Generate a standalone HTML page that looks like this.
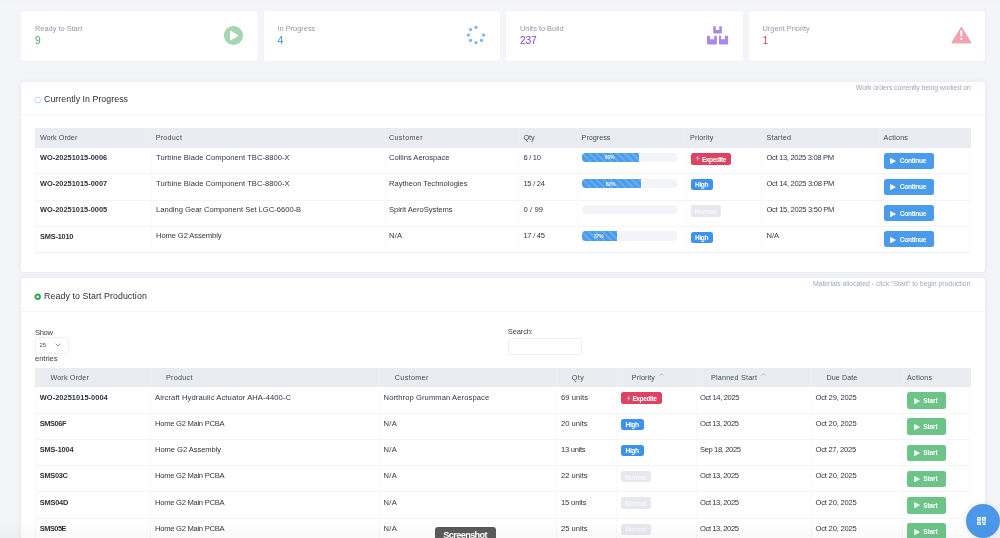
<!DOCTYPE html>
<html><head><meta charset="utf-8"><style>
html,body{margin:0;padding:0;}
body{width:1000px;height:538px;overflow:hidden;position:relative;background:#f4f5f8;font-family:"Liberation Sans",sans-serif;}
.t{position:absolute;white-space:nowrap;}
.r{position:absolute;box-sizing:content-box;}
</style></head><body>
<div id="wrap" style="position:absolute;left:0;top:0;width:1000px;height:538px;will-change:transform;">
<div class="r" style="left:0.00px;top:0.00px;width:1000.00px;height:2.00px;background:#f0f1f4;border-radius:0px;"></div>
<div class="r" style="left:21.00px;top:11.00px;width:236.50px;height:50.00px;background:#fff;border-radius:3px;box-shadow:0 0 2px rgba(30,40,80,0.04);"></div>
<div class="t" style="left:35.00px;top:24.84px;font-size:7.4px;line-height:7.4px;color:#9497ab;">Ready to Start</div>
<div class="t" style="left:35.00px;top:35.88px;font-size:10.3px;line-height:10.3px;color:#4fa866;">9</div>
<div class="r" style="left:263.50px;top:11.00px;width:236.50px;height:50.00px;background:#fff;border-radius:3px;box-shadow:0 0 2px rgba(30,40,80,0.04);"></div>
<div class="t" style="left:277.50px;top:24.84px;font-size:7.4px;line-height:7.4px;color:#9497ab;">In Progress</div>
<div class="t" style="left:277.50px;top:35.88px;font-size:10.3px;line-height:10.3px;color:#3a86ee;">4</div>
<div class="r" style="left:506.00px;top:11.00px;width:236.50px;height:50.00px;background:#fff;border-radius:3px;box-shadow:0 0 2px rgba(30,40,80,0.04);"></div>
<div class="t" style="left:520.00px;top:24.84px;font-size:7.4px;line-height:7.4px;color:#9497ab;">Units to Build</div>
<div class="t" style="left:520.00px;top:35.88px;font-size:10.3px;line-height:10.3px;color:#7749dd;letter-spacing:-0.193px;">237</div>
<div class="r" style="left:748.50px;top:11.00px;width:236.50px;height:50.00px;background:#fff;border-radius:3px;box-shadow:0 0 2px rgba(30,40,80,0.04);"></div>
<div class="t" style="left:762.50px;top:24.84px;font-size:7.4px;line-height:7.4px;color:#9497ab;">Urgent Priority</div>
<div class="t" style="left:762.50px;top:35.88px;font-size:10.3px;line-height:10.3px;color:#e0395a;">1</div>
<svg class="r" style="left:223px;top:25px" width="21" height="21" viewBox="0 0 21 21"><circle cx="10.5" cy="10.5" r="9.6" fill="#a5d5b1"/><path d="M7.6 6.3 L14.6 10.5 L7.6 14.7 Z" fill="#fff" stroke="#fff" stroke-width="1.2" stroke-linejoin="round"/></svg>
<svg class="r" style="left:466px;top:25.4px" width="20" height="20" viewBox="0 0 20 20"><circle cx="10.00" cy="2.30" r="1.65" fill="#7db7f1"/><circle cx="4.56" cy="4.56" r="1.65" fill="#7db7f1"/><circle cx="2.30" cy="10.00" r="1.65" fill="#7db7f1"/><circle cx="4.56" cy="15.44" r="1.65" fill="#7db7f1"/><circle cx="10.00" cy="17.70" r="1.65" fill="#7db7f1"/><circle cx="15.44" cy="15.44" r="1.65" fill="#7db7f1"/><circle cx="17.70" cy="10.00" r="1.65" fill="#7db7f1"/></svg>
<svg class="r" style="left:706px;top:25px" width="23" height="21" viewBox="0 0 23 21"><path d="M8.2 1.2 H9.8 V4.9 H13.3 V1.2 H14.9 A1 1 0 0 1 15.9 2.2 V7.6 A1 1 0 0 1 14.9 8.6 H8.2 A1 1 0 0 1 7.2 7.6 V2.2 A1 1 0 0 1 8.2 1.2 Z" fill="#a98ae8"/><path d="M2 10.8 H4 V14.2 H8.2 V10.8 H9.9 A1 1 0 0 1 10.9 11.8 V18.6 A1 1 0 0 1 9.9 19.6 H2 A1 1 0 0 1 1 18.6 V11.8 A1 1 0 0 1 2 10.8 Z" fill="#a98ae8"/><path d="M13.9 10.8 H15 V14.2 H18.9 V10.8 H21.1 A1 1 0 0 1 22.1 11.8 V18.6 A1 1 0 0 1 21.1 19.6 H13.9 A1 1 0 0 1 12.9 18.6 V11.8 A1 1 0 0 1 13.9 10.8 Z" fill="#a98ae8"/></svg>
<svg class="r" style="left:951px;top:26px" width="21" height="18" viewBox="0 0 21 18"><path d="M10.4 1.3 L19.8 16.8 L1.0 16.8 Z" fill="#f0a1b3" stroke="#f0a1b3" stroke-width="1.2" stroke-linejoin="round"/><rect x="9.35" y="4.3" width="1.9" height="6.2" rx="0.9" fill="#fff"/><circle cx="10.3" cy="12.9" r="1.1" fill="#fff"/></svg>
<div class="r" style="left:20.50px;top:81.50px;width:964.50px;height:190.00px;background:#fff;border-radius:3px;box-shadow:0 0 4px 1px rgba(30,40,70,0.05);"></div>
<div class="r" style="left:20.50px;top:114.80px;width:964.50px;height:1.00px;background:#f4f5f7;border-radius:0px;"></div>
<svg class="r" style="left:33.6px;top:95.6px" width="8" height="8" viewBox="0 0 8 8"><circle cx="4" cy="4" r="3" fill="none" stroke="#8fb6ee" stroke-width="0.9" stroke-dasharray="1.1 0.85" transform="rotate(-60 4 4)"/></svg>
<div class="t" style="left:44.00px;top:95.15px;font-size:8.8px;line-height:8.8px;color:#2b2e3a;letter-spacing:0.043px;">Currently In Progress</div>
<div class="t" style="left:855.80px;top:83.77px;font-size:7.0px;line-height:7.0px;color:#a3a6b7;letter-spacing:-0.139px;">Work orders currently being worked on</div>
<div class="r" style="left:35.00px;top:127.80px;width:935.50px;height:19.80px;background:#e9ecf1;border-radius:0px;"></div>
<div class="r" style="left:151.00px;top:127.80px;width:1.00px;height:19.80px;background:#eef0f4;border-radius:0px;"></div>
<div class="r" style="left:384.80px;top:127.80px;width:1.00px;height:19.80px;background:#eef0f4;border-radius:0px;"></div>
<div class="r" style="left:518.00px;top:127.80px;width:1.00px;height:19.80px;background:#eef0f4;border-radius:0px;"></div>
<div class="r" style="left:577.00px;top:127.80px;width:1.00px;height:19.80px;background:#eef0f4;border-radius:0px;"></div>
<div class="r" style="left:685.00px;top:127.80px;width:1.00px;height:19.80px;background:#eef0f4;border-radius:0px;"></div>
<div class="r" style="left:761.00px;top:127.80px;width:1.00px;height:19.80px;background:#eef0f4;border-radius:0px;"></div>
<div class="r" style="left:878.40px;top:127.80px;width:1.00px;height:19.80px;background:#eef0f4;border-radius:0px;"></div>
<div class="t" style="left:39.90px;top:134.11px;font-size:7.2px;line-height:7.2px;color:#474b59;letter-spacing:0.044px;">Work Order</div>
<div class="t" style="left:155.70px;top:134.11px;font-size:7.2px;line-height:7.2px;color:#474b59;letter-spacing:0.248px;">Product</div>
<div class="t" style="left:389.00px;top:134.11px;font-size:7.2px;line-height:7.2px;color:#474b59;letter-spacing:0.342px;">Customer</div>
<div class="t" style="left:523.40px;top:134.11px;font-size:7.2px;line-height:7.2px;color:#474b59;letter-spacing:-0.000px;">Qty</div>
<div class="t" style="left:581.60px;top:134.11px;font-size:7.2px;line-height:7.2px;color:#474b59;letter-spacing:-0.002px;">Progress</div>
<div class="t" style="left:690.00px;top:134.11px;font-size:7.2px;line-height:7.2px;color:#474b59;letter-spacing:0.143px;">Priority</div>
<div class="t" style="left:766.40px;top:134.11px;font-size:7.2px;line-height:7.2px;color:#474b59;letter-spacing:0.231px;">Started</div>
<div class="t" style="left:883.50px;top:134.11px;font-size:7.2px;line-height:7.2px;color:#474b59;letter-spacing:0.132px;">Actions</div>
<div class="r" style="left:35.00px;top:173.40px;width:935.50px;height:1.00px;background:#f3f4f6;border-radius:0px;"></div>
<div class="t" style="left:40.00px;top:153.74px;font-size:7.4px;line-height:7.4px;color:#2e313a;font-weight:700;letter-spacing:0.010px;">WO-20251015-0006</div>
<div class="t" style="left:156.00px;top:153.57px;font-size:7.6px;line-height:7.6px;color:#32353f;letter-spacing:0.034px;">Turbine Blade Component TBC-8800-X</div>
<div class="t" style="left:389.00px;top:153.57px;font-size:7.6px;line-height:7.6px;color:#32353f;letter-spacing:-0.016px;">Collins Aerospace</div>
<div class="t" style="left:523.40px;top:153.57px;font-size:7.6px;line-height:7.6px;color:#32353f;letter-spacing:-0.283px;">6 / 10</div>
<div class="r" style="left:581.50px;top:152.50px;width:95.70px;height:9.30px;background:#f2f4f7;border-radius:3.5px;"></div>
<div class="r" style="left:581.50px;top:152.50px;width:57.42px;height:9.30px;background:#4a9bea;border-radius:0px;border-radius:3.5px 0 0 3.5px;background-image:repeating-linear-gradient(45deg,rgba(255,255,255,0.15) 0 2.5px,transparent 2.5px 5px);"></div>
<div class="t" style="left:604.71px;top:155.20px;font-size:5.2px;line-height:5.2px;color:#e8f1fc;font-weight:700;letter-spacing:-0.204px;">60%</div>
<div class="r" style="left:690.50px;top:152.80px;width:40.50px;height:11.80px;background:#de4260;border-radius:2.5px;"></div>
<svg class="r" style="left:695.10px;top:155.40px" width="5.4" height="6.6" viewBox="0 0 5.4 6.6"><path d="M3.5 0 L0.2 3.7 H2.3 L1.5 6.6 L5.2 2.7 H3.1 Z" fill="#a4adc4"/></svg>
<div class="t" style="left:701.90px;top:156.51px;font-size:6.6px;line-height:6.6px;color:#fff;font-weight:700;letter-spacing:-0.430px;">Expedite</div>
<div class="t" style="left:766.50px;top:153.57px;font-size:7.6px;line-height:7.6px;color:#32353f;letter-spacing:-0.333px;">Oct 13, 2025 3:08 PM</div>
<div class="r" style="left:883.60px;top:152.50px;width:50.60px;height:16.00px;background:#4a9bec;border-radius:2.5px;"></div>
<svg class="r" style="left:890.40px;top:157.90px" width="6" height="6.2" viewBox="0 0 6 6.2"><path d="M0.3 0.3 L5.6 3.1 L0.3 5.9 Z" fill="#fff" stroke="#fff" stroke-width="0.5" stroke-linejoin="round"/></svg>
<div class="t" style="left:899.80px;top:158.11px;font-size:6.6px;line-height:6.6px;color:#fff;font-weight:700;letter-spacing:-0.271px;">Continue</div>
<div class="r" style="left:35.00px;top:199.70px;width:935.50px;height:1.00px;background:#f3f4f6;border-radius:0px;"></div>
<div class="t" style="left:40.00px;top:180.04px;font-size:7.4px;line-height:7.4px;color:#2e313a;font-weight:700;letter-spacing:0.010px;">WO-20251015-0007</div>
<div class="t" style="left:156.00px;top:179.87px;font-size:7.6px;line-height:7.6px;color:#32353f;letter-spacing:0.034px;">Turbine Blade Component TBC-8800-X</div>
<div class="t" style="left:389.00px;top:179.87px;font-size:7.6px;line-height:7.6px;color:#32353f;letter-spacing:-0.013px;">Raytheon Technologies</div>
<div class="t" style="left:523.40px;top:179.87px;font-size:7.6px;line-height:7.6px;color:#32353f;letter-spacing:-0.274px;">15 / 24</div>
<div class="r" style="left:581.50px;top:178.80px;width:95.70px;height:9.30px;background:#f2f4f7;border-radius:3.5px;"></div>
<div class="r" style="left:581.50px;top:178.80px;width:59.33px;height:9.30px;background:#4a9bea;border-radius:0px;border-radius:3.5px 0 0 3.5px;background-image:repeating-linear-gradient(45deg,rgba(255,255,255,0.15) 0 2.5px,transparent 2.5px 5px);"></div>
<div class="t" style="left:605.67px;top:181.50px;font-size:5.2px;line-height:5.2px;color:#e8f1fc;font-weight:700;letter-spacing:-0.204px;">62%</div>
<div class="r" style="left:690.50px;top:179.10px;width:22.50px;height:11.20px;background:#3d93ec;border-radius:2.5px;"></div>
<div class="t" style="left:695.10px;top:182.41px;font-size:6.6px;line-height:6.6px;color:#fff;font-weight:700;letter-spacing:-0.421px;">High</div>
<div class="t" style="left:766.50px;top:179.87px;font-size:7.6px;line-height:7.6px;color:#32353f;letter-spacing:-0.312px;">Oct 14, 2025 3:08 PM</div>
<div class="r" style="left:883.60px;top:178.80px;width:50.60px;height:16.00px;background:#4a9bec;border-radius:2.5px;"></div>
<svg class="r" style="left:890.40px;top:184.20px" width="6" height="6.2" viewBox="0 0 6 6.2"><path d="M0.3 0.3 L5.6 3.1 L0.3 5.9 Z" fill="#fff" stroke="#fff" stroke-width="0.5" stroke-linejoin="round"/></svg>
<div class="t" style="left:899.80px;top:184.41px;font-size:6.6px;line-height:6.6px;color:#fff;font-weight:700;letter-spacing:-0.271px;">Continue</div>
<div class="r" style="left:35.00px;top:226.00px;width:935.50px;height:1.00px;background:#f3f4f6;border-radius:0px;"></div>
<div class="t" style="left:40.00px;top:206.34px;font-size:7.4px;line-height:7.4px;color:#2e313a;font-weight:700;letter-spacing:0.010px;">WO-20251015-0005</div>
<div class="t" style="left:156.00px;top:206.17px;font-size:7.6px;line-height:7.6px;color:#32353f;letter-spacing:-0.013px;">Landing Gear Component Set LGC-6600-B</div>
<div class="t" style="left:389.00px;top:206.17px;font-size:7.6px;line-height:7.6px;color:#32353f;letter-spacing:-0.036px;">Spirit AeroSystems</div>
<div class="t" style="left:523.40px;top:206.17px;font-size:7.6px;line-height:7.6px;color:#32353f;letter-spacing:0.117px;">0 / 99</div>
<div class="r" style="left:581.50px;top:205.10px;width:95.70px;height:9.30px;background:#f2f4f7;border-radius:3.5px;"></div>
<div class="r" style="left:690.50px;top:205.40px;width:30.30px;height:11.20px;background:#e6e8ee;border-radius:2.5px;"></div>
<div class="t" style="left:694.80px;top:208.88px;font-size:6.4px;line-height:6.4px;color:#f6f7f9;font-weight:700;letter-spacing:-0.110px;">Normal</div>
<div class="t" style="left:766.50px;top:206.17px;font-size:7.6px;line-height:7.6px;color:#32353f;letter-spacing:-0.312px;">Oct 15, 2025 3:50 PM</div>
<div class="r" style="left:883.60px;top:205.10px;width:50.60px;height:16.00px;background:#4a9bec;border-radius:2.5px;"></div>
<svg class="r" style="left:890.40px;top:210.50px" width="6" height="6.2" viewBox="0 0 6 6.2"><path d="M0.3 0.3 L5.6 3.1 L0.3 5.9 Z" fill="#fff" stroke="#fff" stroke-width="0.5" stroke-linejoin="round"/></svg>
<div class="t" style="left:899.80px;top:210.71px;font-size:6.6px;line-height:6.6px;color:#fff;font-weight:700;letter-spacing:-0.271px;">Continue</div>
<div class="t" style="left:40.00px;top:232.64px;font-size:7.4px;line-height:7.4px;color:#2e313a;font-weight:700;letter-spacing:-0.209px;">SMS-1010</div>
<div class="t" style="left:156.00px;top:232.47px;font-size:7.6px;line-height:7.6px;color:#32353f;letter-spacing:-0.105px;">Home G2 Assembly</div>
<div class="t" style="left:389.00px;top:232.47px;font-size:7.6px;line-height:7.6px;color:#32353f;letter-spacing:0.165px;">N/A</div>
<div class="t" style="left:523.40px;top:232.47px;font-size:7.6px;line-height:7.6px;color:#32353f;letter-spacing:-0.274px;">17 / 45</div>
<div class="r" style="left:581.50px;top:231.40px;width:95.70px;height:9.30px;background:#f2f4f7;border-radius:3.5px;"></div>
<div class="r" style="left:581.50px;top:231.40px;width:35.41px;height:9.30px;background:#4a9bea;border-radius:0px;border-radius:3.5px 0 0 3.5px;background-image:repeating-linear-gradient(45deg,rgba(255,255,255,0.15) 0 2.5px,transparent 2.5px 5px);"></div>
<div class="t" style="left:593.70px;top:234.10px;font-size:5.2px;line-height:5.2px;color:#e8f1fc;font-weight:700;letter-spacing:-0.204px;">37%</div>
<div class="r" style="left:690.50px;top:231.70px;width:22.50px;height:11.20px;background:#3d93ec;border-radius:2.5px;"></div>
<div class="t" style="left:695.10px;top:235.01px;font-size:6.6px;line-height:6.6px;color:#fff;font-weight:700;letter-spacing:-0.421px;">High</div>
<div class="t" style="left:766.50px;top:232.47px;font-size:7.6px;line-height:7.6px;color:#32353f;letter-spacing:-0.035px;">N/A</div>
<div class="r" style="left:883.60px;top:231.40px;width:50.60px;height:16.00px;background:#4a9bec;border-radius:2.5px;"></div>
<svg class="r" style="left:890.40px;top:236.80px" width="6" height="6.2" viewBox="0 0 6 6.2"><path d="M0.3 0.3 L5.6 3.1 L0.3 5.9 Z" fill="#fff" stroke="#fff" stroke-width="0.5" stroke-linejoin="round"/></svg>
<div class="t" style="left:899.80px;top:237.01px;font-size:6.6px;line-height:6.6px;color:#fff;font-weight:700;letter-spacing:-0.271px;">Continue</div>
<div class="r" style="left:35.00px;top:147.60px;width:1.00px;height:105.20px;background:#f8f9fb;border-radius:0px;"></div>
<div class="r" style="left:151.00px;top:147.60px;width:1.00px;height:105.20px;background:#f8f9fb;border-radius:0px;"></div>
<div class="r" style="left:384.80px;top:147.60px;width:1.00px;height:105.20px;background:#f8f9fb;border-radius:0px;"></div>
<div class="r" style="left:518.00px;top:147.60px;width:1.00px;height:105.20px;background:#f8f9fb;border-radius:0px;"></div>
<div class="r" style="left:577.00px;top:147.60px;width:1.00px;height:105.20px;background:#f8f9fb;border-radius:0px;"></div>
<div class="r" style="left:685.00px;top:147.60px;width:1.00px;height:105.20px;background:#f8f9fb;border-radius:0px;"></div>
<div class="r" style="left:761.00px;top:147.60px;width:1.00px;height:105.20px;background:#f8f9fb;border-radius:0px;"></div>
<div class="r" style="left:878.40px;top:147.60px;width:1.00px;height:105.20px;background:#f8f9fb;border-radius:0px;"></div>
<div class="r" style="left:969.50px;top:147.60px;width:1.00px;height:105.20px;background:#f8f9fb;border-radius:0px;"></div>
<div class="r" style="left:35.00px;top:252.30px;width:935.50px;height:1.00px;background:#f1f2f5;border-radius:0px;"></div>
<div class="r" style="left:20.50px;top:278.00px;width:964.50px;height:300.00px;background:#fff;border-radius:3px;box-shadow:0 0 4px 1px rgba(30,40,70,0.05);"></div>
<div class="r" style="left:20.50px;top:310.80px;width:964.50px;height:1.00px;background:#f4f5f7;border-radius:0px;"></div>
<svg class="r" style="left:34px;top:293px" width="7.4" height="7.4" viewBox="0 0 7.4 7.4"><circle cx="3.7" cy="3.7" r="2.25" fill="none" stroke="#2ea44f" stroke-width="1.9"/></svg>
<div class="t" style="left:44.10px;top:292.25px;font-size:8.8px;line-height:8.8px;color:#2b2e3a;letter-spacing:0.081px;">Ready to Start Production</div>
<div class="t" style="left:812.90px;top:280.56px;font-size:6.9px;line-height:6.9px;color:#a3a6b7;letter-spacing:-0.025px;">Materials allocated - click &quot;Start&quot; to begin production</div>
<div class="t" style="left:35.00px;top:328.87px;font-size:7.6px;line-height:7.6px;color:#3a3d4a;letter-spacing:-0.337px;">Show</div>
<div class="r" style="left:34.5px;top:337.3px;width:32.5px;height:14.6px;border:0.8px solid #eef0f3;border-radius:3px"></div>
<div class="t" style="left:39.60px;top:342.89px;font-size:5.8px;line-height:5.8px;color:#4a4d5a;">25</div>
<svg class="r" style="left:55px;top:343.2px" width="6" height="4" viewBox="0 0 6 4"><path d="M0.6 0.8 L3 3.1 L5.4 0.8" fill="none" stroke="#555" stroke-width="0.7"/></svg>
<div class="t" style="left:35.00px;top:355.17px;font-size:7.6px;line-height:7.6px;color:#3a3d4a;letter-spacing:-0.052px;">entries</div>
<div class="t" style="left:507.80px;top:328.47px;font-size:7.6px;line-height:7.6px;color:#3a3d4a;letter-spacing:-0.165px;">Search:</div>
<div class="r" style="left:507.5px;top:337.8px;width:72.2px;height:15.7px;border:0.8px solid #eceef2;border-radius:3px"></div>
<div class="r" style="left:34.50px;top:367.50px;width:936.00px;height:19.50px;background:#e9ecf1;border-radius:0px;"></div>
<div class="r" style="left:150.00px;top:367.50px;width:1.00px;height:19.50px;background:#eef0f4;border-radius:0px;"></div>
<div class="r" style="left:378.60px;top:367.50px;width:1.00px;height:19.50px;background:#eef0f4;border-radius:0px;"></div>
<div class="r" style="left:556.30px;top:367.50px;width:1.00px;height:19.50px;background:#eef0f4;border-radius:0px;"></div>
<div class="r" style="left:616.00px;top:367.50px;width:1.00px;height:19.50px;background:#eef0f4;border-radius:0px;"></div>
<div class="r" style="left:695.50px;top:367.50px;width:1.00px;height:19.50px;background:#eef0f4;border-radius:0px;"></div>
<div class="r" style="left:810.50px;top:367.50px;width:1.00px;height:19.50px;background:#eef0f4;border-radius:0px;"></div>
<div class="r" style="left:902.00px;top:367.50px;width:1.00px;height:19.50px;background:#eef0f4;border-radius:0px;"></div>
<div class="t" style="left:50.40px;top:374.01px;font-size:7.2px;line-height:7.2px;color:#474b59;letter-spacing:0.155px;">Work Order</div>
<div class="t" style="left:166.00px;top:374.01px;font-size:7.2px;line-height:7.2px;color:#474b59;letter-spacing:0.281px;">Product</div>
<div class="t" style="left:394.80px;top:374.01px;font-size:7.2px;line-height:7.2px;color:#474b59;letter-spacing:0.342px;">Customer</div>
<div class="t" style="left:571.80px;top:374.01px;font-size:7.2px;line-height:7.2px;color:#474b59;letter-spacing:0.400px;">Qty</div>
<div class="t" style="left:631.80px;top:374.01px;font-size:7.2px;line-height:7.2px;color:#474b59;letter-spacing:0.100px;">Priority</div>
<div class="t" style="left:711.00px;top:374.01px;font-size:7.2px;line-height:7.2px;color:#474b59;letter-spacing:0.198px;">Planned Start</div>
<div class="t" style="left:826.50px;top:374.01px;font-size:7.2px;line-height:7.2px;color:#474b59;letter-spacing:0.069px;">Due Date</div>
<div class="t" style="left:907.00px;top:374.01px;font-size:7.2px;line-height:7.2px;color:#474b59;letter-spacing:0.265px;">Actions</div>
<svg class="r" style="left:659.00px;top:373px" width="5" height="3" viewBox="0 0 5 3"><path d="M0.6 2.6 L2.5 0.7 L4.4 2.6" fill="none" stroke="#9aa0b0" stroke-width="0.7"/></svg>
<svg class="r" style="left:760.50px;top:373px" width="5" height="3" viewBox="0 0 5 3"><path d="M0.6 2.6 L2.5 0.7 L4.4 2.6" fill="none" stroke="#9aa0b0" stroke-width="0.7"/></svg>
<div class="r" style="left:34.50px;top:387.00px;width:1.00px;height:160.00px;background:#f8f9fb;border-radius:0px;"></div>
<div class="r" style="left:150.00px;top:387.00px;width:1.00px;height:160.00px;background:#f8f9fb;border-radius:0px;"></div>
<div class="r" style="left:378.60px;top:387.00px;width:1.00px;height:160.00px;background:#f8f9fb;border-radius:0px;"></div>
<div class="r" style="left:556.30px;top:387.00px;width:1.00px;height:160.00px;background:#f8f9fb;border-radius:0px;"></div>
<div class="r" style="left:616.00px;top:387.00px;width:1.00px;height:160.00px;background:#f8f9fb;border-radius:0px;"></div>
<div class="r" style="left:695.50px;top:387.00px;width:1.00px;height:160.00px;background:#f8f9fb;border-radius:0px;"></div>
<div class="r" style="left:810.50px;top:387.00px;width:1.00px;height:160.00px;background:#f8f9fb;border-radius:0px;"></div>
<div class="r" style="left:902.00px;top:387.00px;width:1.00px;height:160.00px;background:#f8f9fb;border-radius:0px;"></div>
<div class="r" style="left:969.50px;top:387.00px;width:1.00px;height:160.00px;background:#f8f9fb;border-radius:0px;"></div>
<div class="r" style="left:34.50px;top:412.74px;width:936.00px;height:1.00px;background:#f3f4f6;border-radius:0px;"></div>
<div class="t" style="left:39.80px;top:393.74px;font-size:7.4px;line-height:7.4px;color:#2e313a;font-weight:700;letter-spacing:0.063px;">WO-20251015-0004</div>
<div class="t" style="left:155.00px;top:393.57px;font-size:7.6px;line-height:7.6px;color:#32353f;letter-spacing:0.095px;">Aircraft Hydraulic Actuator AHA-4400-C</div>
<div class="t" style="left:383.60px;top:393.57px;font-size:7.6px;line-height:7.6px;color:#32353f;letter-spacing:0.084px;">Northrop Grumman Aerospace</div>
<div class="t" style="left:561.00px;top:393.57px;font-size:7.6px;line-height:7.6px;color:#32353f;letter-spacing:0.054px;">69 units</div>
<div class="r" style="left:621.00px;top:392.40px;width:40.50px;height:11.80px;background:#de4260;border-radius:2.5px;"></div>
<svg class="r" style="left:625.60px;top:395.00px" width="5.4" height="6.6" viewBox="0 0 5.4 6.6"><path d="M3.5 0 L0.2 3.7 H2.3 L1.5 6.6 L5.2 2.7 H3.1 Z" fill="#a4adc4"/></svg>
<div class="t" style="left:632.40px;top:396.11px;font-size:6.6px;line-height:6.6px;color:#fff;font-weight:700;letter-spacing:-0.430px;">Expedite</div>
<div class="t" style="left:700.00px;top:393.57px;font-size:7.6px;line-height:7.6px;color:#32353f;letter-spacing:-0.356px;">Oct 14, 2025</div>
<div class="t" style="left:815.50px;top:393.57px;font-size:7.6px;line-height:7.6px;color:#32353f;letter-spacing:-0.202px;">Oct 29, 2025</div>
<div class="r" style="left:907.00px;top:392.10px;width:38.80px;height:16.60px;background:#6dc488;border-radius:2.5px;"></div>
<svg class="r" style="left:913.80px;top:397.50px" width="6" height="6.2" viewBox="0 0 6 6.2"><path d="M0.3 0.3 L5.6 3.1 L0.3 5.9 Z" fill="#fff" stroke="#fff" stroke-width="0.5" stroke-linejoin="round"/></svg>
<div class="t" style="left:923.20px;top:397.71px;font-size:6.6px;line-height:6.6px;color:#fff;font-weight:700;letter-spacing:-0.134px;">Start</div>
<div class="r" style="left:34.50px;top:438.98px;width:936.00px;height:1.00px;background:#f3f4f6;border-radius:0px;"></div>
<div class="t" style="left:39.80px;top:419.98px;font-size:7.4px;line-height:7.4px;color:#2e313a;font-weight:700;letter-spacing:-0.417px;">SMS06F</div>
<div class="t" style="left:155.00px;top:419.81px;font-size:7.6px;line-height:7.6px;color:#32353f;letter-spacing:-0.270px;">Home G2 Main PCBA</div>
<div class="t" style="left:383.60px;top:419.81px;font-size:7.6px;line-height:7.6px;color:#32353f;letter-spacing:0.265px;">N/A</div>
<div class="t" style="left:561.00px;top:419.81px;font-size:7.6px;line-height:7.6px;color:#32353f;letter-spacing:-0.003px;">20 units</div>
<div class="r" style="left:621.00px;top:418.64px;width:22.50px;height:11.20px;background:#3d93ec;border-radius:2.5px;"></div>
<div class="t" style="left:625.60px;top:421.95px;font-size:6.6px;line-height:6.6px;color:#fff;font-weight:700;letter-spacing:-0.421px;">High</div>
<div class="t" style="left:700.00px;top:419.81px;font-size:7.6px;line-height:7.6px;color:#32353f;letter-spacing:-0.411px;">Oct 13, 2025</div>
<div class="t" style="left:815.50px;top:419.81px;font-size:7.6px;line-height:7.6px;color:#32353f;letter-spacing:-0.202px;">Oct 20, 2025</div>
<div class="r" style="left:907.00px;top:418.34px;width:38.80px;height:16.60px;background:#6dc488;border-radius:2.5px;"></div>
<svg class="r" style="left:913.80px;top:423.74px" width="6" height="6.2" viewBox="0 0 6 6.2"><path d="M0.3 0.3 L5.6 3.1 L0.3 5.9 Z" fill="#fff" stroke="#fff" stroke-width="0.5" stroke-linejoin="round"/></svg>
<div class="t" style="left:923.20px;top:423.95px;font-size:6.6px;line-height:6.6px;color:#fff;font-weight:700;letter-spacing:-0.134px;">Start</div>
<div class="r" style="left:34.50px;top:465.22px;width:936.00px;height:1.00px;background:#f3f4f6;border-radius:0px;"></div>
<div class="t" style="left:39.80px;top:446.22px;font-size:7.4px;line-height:7.4px;color:#2e313a;font-weight:700;letter-spacing:-0.152px;">SMS-1004</div>
<div class="t" style="left:155.00px;top:446.05px;font-size:7.6px;line-height:7.6px;color:#32353f;letter-spacing:-0.065px;">Home G2 Assembly</div>
<div class="t" style="left:383.60px;top:446.05px;font-size:7.6px;line-height:7.6px;color:#32353f;letter-spacing:0.265px;">N/A</div>
<div class="t" style="left:561.00px;top:446.05px;font-size:7.6px;line-height:7.6px;color:#32353f;letter-spacing:-0.288px;">13 units</div>
<div class="r" style="left:621.00px;top:444.88px;width:22.50px;height:11.20px;background:#3d93ec;border-radius:2.5px;"></div>
<div class="t" style="left:625.60px;top:448.19px;font-size:6.6px;line-height:6.6px;color:#fff;font-weight:700;letter-spacing:-0.421px;">High</div>
<div class="t" style="left:700.00px;top:446.05px;font-size:7.6px;line-height:7.6px;color:#32353f;letter-spacing:-0.383px;">Sep 18, 2025</div>
<div class="t" style="left:815.50px;top:446.05px;font-size:7.6px;line-height:7.6px;color:#32353f;letter-spacing:-0.256px;">Oct 27, 2025</div>
<div class="r" style="left:907.00px;top:444.58px;width:38.80px;height:16.60px;background:#6dc488;border-radius:2.5px;"></div>
<svg class="r" style="left:913.80px;top:449.98px" width="6" height="6.2" viewBox="0 0 6 6.2"><path d="M0.3 0.3 L5.6 3.1 L0.3 5.9 Z" fill="#fff" stroke="#fff" stroke-width="0.5" stroke-linejoin="round"/></svg>
<div class="t" style="left:923.20px;top:450.19px;font-size:6.6px;line-height:6.6px;color:#fff;font-weight:700;letter-spacing:-0.134px;">Start</div>
<div class="r" style="left:34.50px;top:491.46px;width:936.00px;height:1.00px;background:#f3f4f6;border-radius:0px;"></div>
<div class="t" style="left:39.80px;top:472.46px;font-size:7.4px;line-height:7.4px;color:#2e313a;font-weight:700;letter-spacing:-0.282px;">SMS03C</div>
<div class="t" style="left:155.00px;top:472.29px;font-size:7.6px;line-height:7.6px;color:#32353f;letter-spacing:-0.270px;">Home G2 Main PCBA</div>
<div class="t" style="left:383.60px;top:472.29px;font-size:7.6px;line-height:7.6px;color:#32353f;letter-spacing:0.265px;">N/A</div>
<div class="t" style="left:561.00px;top:472.29px;font-size:7.6px;line-height:7.6px;color:#32353f;letter-spacing:-0.003px;">22 units</div>
<div class="r" style="left:621.00px;top:471.12px;width:30.30px;height:11.20px;background:#e6e8ee;border-radius:2.5px;"></div>
<div class="t" style="left:625.30px;top:474.60px;font-size:6.4px;line-height:6.4px;color:#f6f7f9;font-weight:700;letter-spacing:-0.110px;">Normal</div>
<div class="t" style="left:700.00px;top:472.29px;font-size:7.6px;line-height:7.6px;color:#32353f;letter-spacing:-0.411px;">Oct 13, 2025</div>
<div class="t" style="left:815.50px;top:472.29px;font-size:7.6px;line-height:7.6px;color:#32353f;letter-spacing:-0.202px;">Oct 20, 2025</div>
<div class="r" style="left:907.00px;top:470.82px;width:38.80px;height:16.60px;background:#6dc488;border-radius:2.5px;"></div>
<svg class="r" style="left:913.80px;top:476.22px" width="6" height="6.2" viewBox="0 0 6 6.2"><path d="M0.3 0.3 L5.6 3.1 L0.3 5.9 Z" fill="#fff" stroke="#fff" stroke-width="0.5" stroke-linejoin="round"/></svg>
<div class="t" style="left:923.20px;top:476.43px;font-size:6.6px;line-height:6.6px;color:#fff;font-weight:700;letter-spacing:-0.134px;">Start</div>
<div class="r" style="left:34.50px;top:517.70px;width:936.00px;height:1.00px;background:#f3f4f6;border-radius:0px;"></div>
<div class="t" style="left:39.80px;top:498.70px;font-size:7.4px;line-height:7.4px;color:#2e313a;font-weight:700;letter-spacing:-0.222px;">SMS04D</div>
<div class="t" style="left:155.00px;top:498.53px;font-size:7.6px;line-height:7.6px;color:#32353f;letter-spacing:-0.270px;">Home G2 Main PCBA</div>
<div class="t" style="left:383.60px;top:498.53px;font-size:7.6px;line-height:7.6px;color:#32353f;letter-spacing:0.265px;">N/A</div>
<div class="t" style="left:561.00px;top:498.53px;font-size:7.6px;line-height:7.6px;color:#32353f;letter-spacing:-0.146px;">15 units</div>
<div class="r" style="left:621.00px;top:497.36px;width:30.30px;height:11.20px;background:#e6e8ee;border-radius:2.5px;"></div>
<div class="t" style="left:625.30px;top:500.84px;font-size:6.4px;line-height:6.4px;color:#f6f7f9;font-weight:700;letter-spacing:-0.110px;">Normal</div>
<div class="t" style="left:700.00px;top:498.53px;font-size:7.6px;line-height:7.6px;color:#32353f;letter-spacing:-0.411px;">Oct 13, 2025</div>
<div class="t" style="left:815.50px;top:498.53px;font-size:7.6px;line-height:7.6px;color:#32353f;letter-spacing:-0.202px;">Oct 20, 2025</div>
<div class="r" style="left:907.00px;top:497.06px;width:38.80px;height:16.60px;background:#6dc488;border-radius:2.5px;"></div>
<svg class="r" style="left:913.80px;top:502.46px" width="6" height="6.2" viewBox="0 0 6 6.2"><path d="M0.3 0.3 L5.6 3.1 L0.3 5.9 Z" fill="#fff" stroke="#fff" stroke-width="0.5" stroke-linejoin="round"/></svg>
<div class="t" style="left:923.20px;top:502.67px;font-size:6.6px;line-height:6.6px;color:#fff;font-weight:700;letter-spacing:-0.134px;">Start</div>
<div class="r" style="left:34.50px;top:543.94px;width:936.00px;height:1.00px;background:#f3f4f6;border-radius:0px;"></div>
<div class="t" style="left:39.80px;top:524.94px;font-size:7.4px;line-height:7.4px;color:#2e313a;font-weight:700;letter-spacing:-0.501px;">SMS05E</div>
<div class="t" style="left:155.00px;top:524.77px;font-size:7.6px;line-height:7.6px;color:#32353f;letter-spacing:-0.270px;">Home G2 Main PCBA</div>
<div class="t" style="left:383.60px;top:524.77px;font-size:7.6px;line-height:7.6px;color:#32353f;letter-spacing:0.265px;">N/A</div>
<div class="t" style="left:561.00px;top:524.77px;font-size:7.6px;line-height:7.6px;color:#32353f;letter-spacing:-0.003px;">25 units</div>
<div class="r" style="left:621.00px;top:523.60px;width:30.30px;height:11.20px;background:#e6e8ee;border-radius:2.5px;"></div>
<div class="t" style="left:625.30px;top:527.08px;font-size:6.4px;line-height:6.4px;color:#f6f7f9;font-weight:700;letter-spacing:-0.110px;">Normal</div>
<div class="t" style="left:700.00px;top:524.77px;font-size:7.6px;line-height:7.6px;color:#32353f;letter-spacing:-0.411px;">Oct 13, 2025</div>
<div class="t" style="left:815.50px;top:524.77px;font-size:7.6px;line-height:7.6px;color:#32353f;letter-spacing:-0.202px;">Oct 20, 2025</div>
<div class="r" style="left:907.00px;top:523.30px;width:38.80px;height:16.60px;background:#6dc488;border-radius:2.5px;"></div>
<svg class="r" style="left:913.80px;top:528.70px" width="6" height="6.2" viewBox="0 0 6 6.2"><path d="M0.3 0.3 L5.6 3.1 L0.3 5.9 Z" fill="#fff" stroke="#fff" stroke-width="0.5" stroke-linejoin="round"/></svg>
<div class="t" style="left:923.20px;top:528.91px;font-size:6.6px;line-height:6.6px;color:#fff;font-weight:700;letter-spacing:-0.134px;">Start</div>
<div class="r" style="left:965.5px;top:504px;width:34px;height:34px;border-radius:50%;background:#4a98ea;box-shadow:0 0 0 1px rgba(250,235,210,0.6),0 0 6px rgba(0,0,0,0.08)"></div>
<svg class="r" style="left:977px;top:517px" width="9" height="8.4" viewBox="0 0 9 8.4"><path fill="#fff" fill-rule="evenodd" d="M0 0.6 A0.6 0.6 0 0 1 0.6 0 H3.4 A0.6 0.6 0 0 1 4 0.6 V3.2 A0.6 0.6 0 0 1 3.4 3.8 H0.6 A0.6 0.6 0 0 1 0 3.2 Z M1.3 1.2 V2.6 H2.7 V1.2 Z"/><path fill="#fff" fill-rule="evenodd" d="M5 0.6 A0.6 0.6 0 0 1 5.6 0 H8.4 A0.6 0.6 0 0 1 9 0.6 V3.2 A0.6 0.6 0 0 1 8.4 3.8 H5.6 A0.6 0.6 0 0 1 5 3.2 Z M6.3 1.2 V2.6 H7.7 V1.2 Z"/><path fill="#fff" fill-rule="evenodd" d="M0 5.2 A0.6 0.6 0 0 1 0.6 4.6 H3.4 A0.6 0.6 0 0 1 4 5.2 V7.8 A0.6 0.6 0 0 1 3.4 8.4 H0.6 A0.6 0.6 0 0 1 0 7.8 Z M1.3 5.8 V7.2 H2.7 V5.8 Z"/><path fill="#fff" d="M5 4.6 H6.4 V6 H5 Z M7.6 4.6 H9 V6 H7.6 Z M5 7 H9 V8.4 H5 Z M6.3 5.6 H7.7 V7.2 H6.3 Z"/></svg>
<div class="r" style="left:0.00px;top:521.00px;width:1000.00px;height:17.00px;background:linear-gradient(rgba(0,0,0,0),rgba(0,0,0,0.022));border-radius:0px;pointer-events:none;"></div>
<div class="r" style="left:435.00px;top:526.60px;width:61.00px;height:20.00px;background:#595959;border-radius:3px;"></div>
<div class="t" style="left:443.30px;top:531.11px;font-size:9.2px;line-height:9.2px;color:#fff;font-weight:700;letter-spacing:-0.634px;">Screenshot</div>
</div>
</body></html>
